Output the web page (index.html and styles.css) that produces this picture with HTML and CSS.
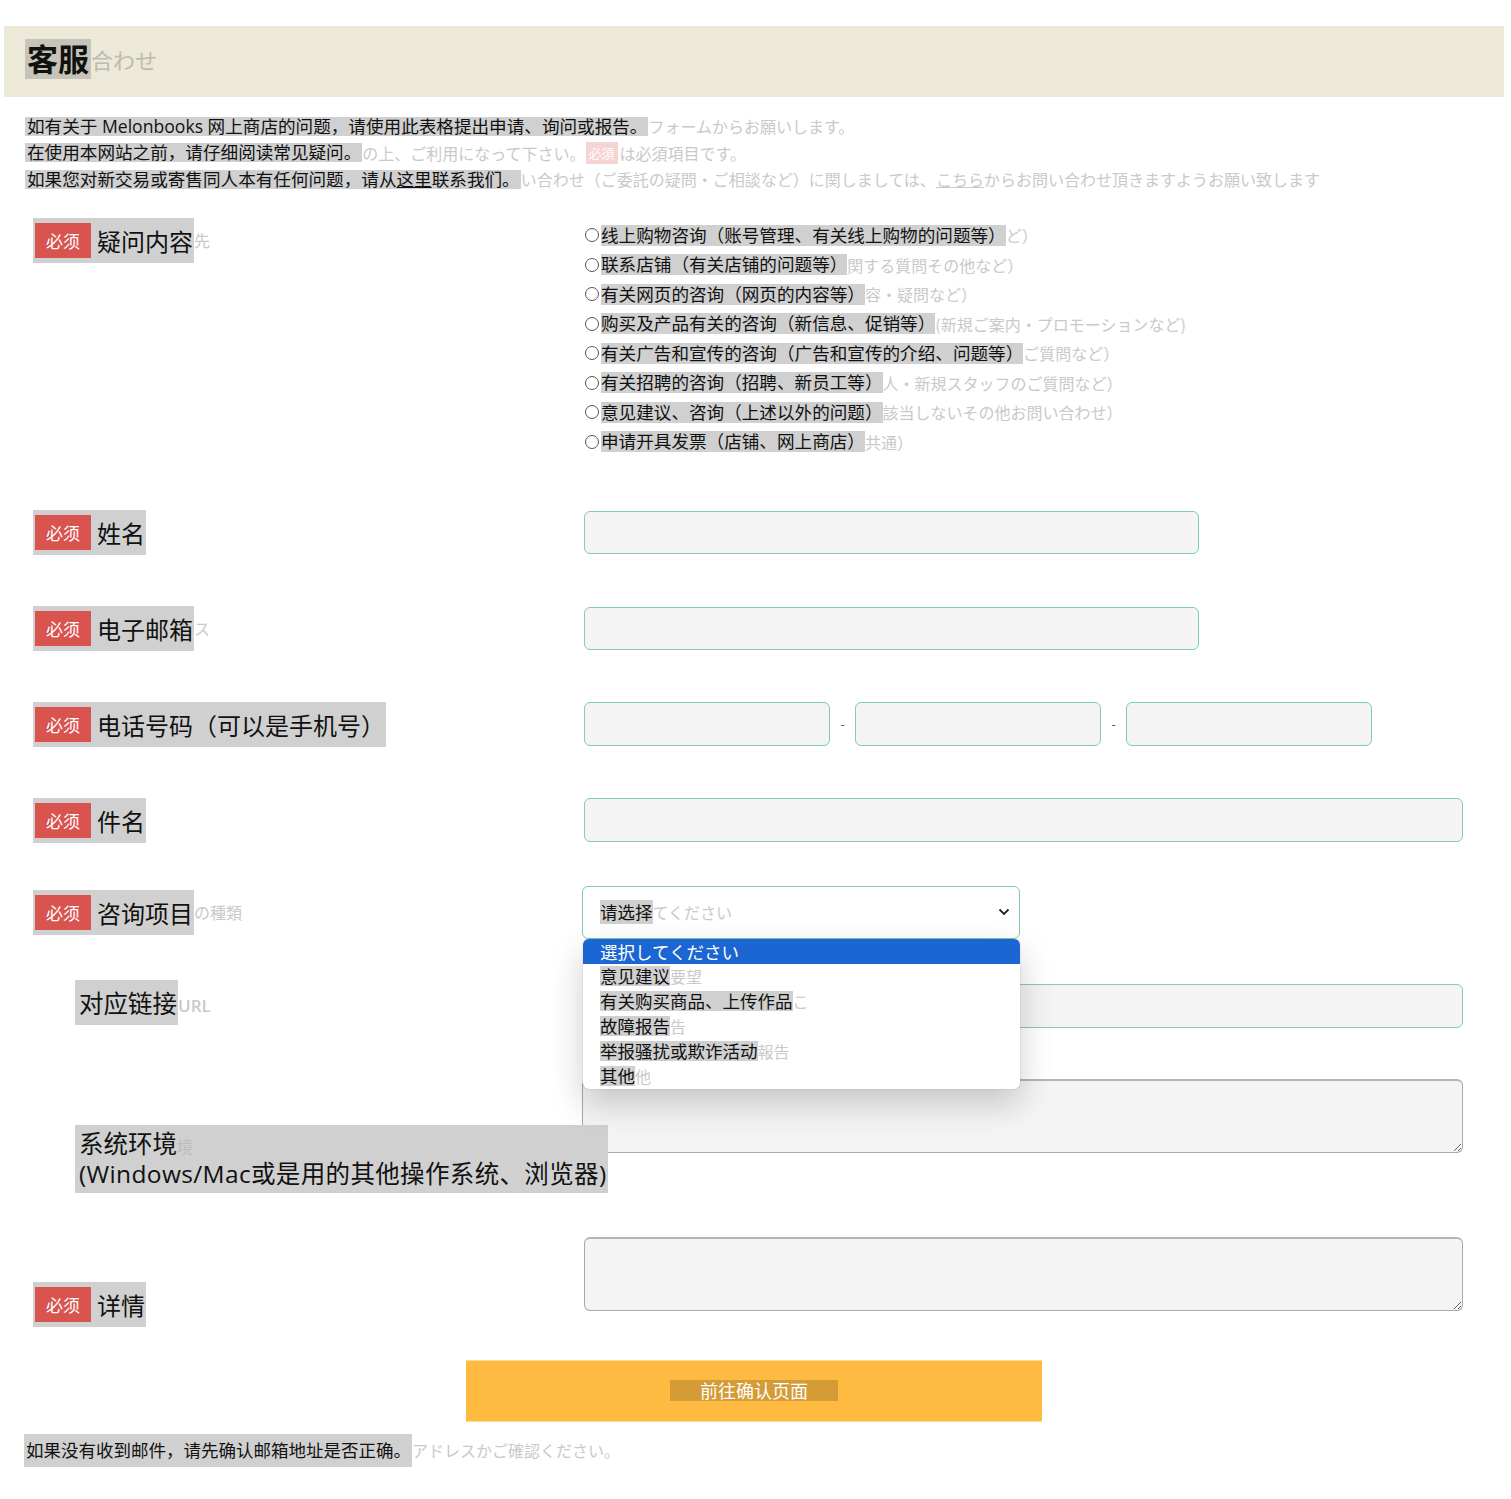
FILE: index.html
```html
<!DOCTYPE html>
<html lang="zh-CN">

<head>
    <meta charset="UTF-8">
    <meta name="viewport" content="width=device-width, initial-scale=1.0">
    <title>客服</title>
    <link rel="stylesheet" href="styles.css">
</head>

<body>
    <div class="page">
        <div class="header">
            <h1 class="title"><span class="hl">客服</span><span class="src">合わせ</span></h1>
        </div>

        <div class="intro">
            <div class="intro-line"><span class="hl">如有关于 Melonbooks 网上商店的问题，请使用此表格提出申请、询问或报告。</span><span class="src">フォームからお願いします。</span></div>
            <div class="intro-line"><span class="hl">在使用本网站之前，请仔细阅读常见疑问。</span><span class="src">の上、ご利用になって下さい。</span><span class="req-mini">必須</span><span class="src">は必須項目です。</span></div>
            <div class="intro-line"><span class="hl">如果您对新交易或寄售同人本有任何问题，请从<u>这里</u>联系我们。</span><span class="src">い合わせ（ご委託の疑問・ご相談など）に関しましては、<u>こちら</u>からお問い合わせ頂きますようお願い致します</span></div>
        </div>

        <form class="form" id="contactForm">
            <div class="form-row row-question">
                <div class="label-col"><span class="label-box"><span class="req">必须</span>疑问内容</span><span class="src">先</span></div>
                <div class="choices">
                    <div class="choice"><span class="circle"></span><span class="hl">线上购物咨询（账号管理、有关线上购物的问题等）</span><span class="src">ど）</span></div>
                    <div class="choice"><span class="circle"></span><span class="hl">联系店铺（有关店铺的问题等）</span><span class="src">関する質問その他など）</span></div>
                    <div class="choice"><span class="circle"></span><span class="hl">有关网页的咨询（网页的内容等）</span><span class="src">容・疑問など）</span></div>
                    <div class="choice"><span class="circle"></span><span class="hl">购买及产品有关的咨询（新信息、促销等）</span><span class="src">(新規ご案内・プロモーションなど)</span></div>
                    <div class="choice"><span class="circle"></span><span class="hl">有关广告和宣传的咨询（广告和宣传的介绍、问题等）</span><span class="src">ご質問など）</span></div>
                    <div class="choice"><span class="circle"></span><span class="hl">有关招聘的咨询（招聘、新员工等）</span><span class="src">人・新規スタッフのご質問など）</span></div>
                    <div class="choice"><span class="circle"></span><span class="hl">意见建议、咨询（上述以外的问题）</span><span class="src">該当しないその他お問い合わせ）</span></div>
                    <div class="choice"><span class="circle"></span><span class="hl">申请开具发票（店铺、网上商店）</span><span class="src">共通）</span></div>
                </div>
            </div>

            <div class="form-row row-name">
                <div class="label-col"><span class="label-box"><span class="req">必须</span>姓名</span></div>
                <input type="text" class="text-input w-mid">
            </div>

            <div class="form-row">
                <div class="label-col"><span class="label-box"><span class="req">必须</span>电子邮箱</span><span class="src">ス</span></div>
                <input type="email" class="text-input w-mid">
            </div>

            <div class="form-row">
                <div class="label-col"><span class="label-box"><span class="req">必须</span>电话号码（可以是手机号）</span></div>
                <div class="phone">
                    <input type="text" class="text-input w-phone">
                    <span class="dash">-</span>
                    <input type="text" class="text-input w-phone">
                    <span class="dash">-</span>
                    <input type="text" class="text-input w-phone">
                </div>
            </div>

            <div class="form-row">
                <div class="label-col"><span class="label-box"><span class="req">必须</span>件名</span></div>
                <input type="text" class="text-input w-full">
            </div>

            <div class="form-row row-select">
                <div class="label-col"><span class="label-box"><span class="req">必须</span>咨询项目</span><span class="src">の種類</span></div>
                <div class="select-wrap">
                    <div class="select">
                        <span><span class="hl">请选择</span><span class="src">てください</span></span>
                        <svg class="chevron" width="12" height="8" viewBox="0 0 12 8"><path d="M1.5 1.5 L6 6 L10.5 1.5" fill="none" stroke="#222" stroke-width="1.8"/></svg>
                    </div>
                    <div class="dropdown">
                        <div class="option active">選択してください</div>
                        <div class="option"><span class="hl">意见建议</span><span class="src">要望</span></div>
                        <div class="option"><span class="hl">有关购买商品、上传作品</span><span class="src">こ</span></div>
                        <div class="option"><span class="hl">故障报告</span><span class="src">告</span></div>
                        <div class="option"><span class="hl">举报骚扰或欺诈活动</span><span class="src">報告</span></div>
                        <div class="option"><span class="hl">其他</span><span class="src">他</span></div>
                    </div>
                </div>
            </div>

            <div class="form-row row-url">
                <div class="label-col"><span class="label-box plain">对应链接</span><span class="src src-url">URL</span></div>
                <input type="text" class="text-input w-full">
            </div>

            <div class="form-row row-area">
                <div class="label-col">
                    <span class="label-box plain multi">
                        <span class="line">系统环境<span class="src-in">境</span></span>
                        <span class="line line-wide">(Windows/Mac或是用的其他操作系统、浏览器)</span>
                    </span>
                </div>
                <textarea class="textarea wide"></textarea>
            </div>

            <div class="form-row row-area row-detail">
                <div class="label-col"><span class="label-box"><span class="req">必须</span>详情</span></div>
                <textarea class="textarea"></textarea>
            </div>

            <div class="actions">
                <button type="submit" class="btn-confirm"><span class="hl-btn">前往确认页面</span></button>
            </div>
        </form>

        <div class="note"><span class="hl">如果没有收到邮件，请先确认邮箱地址是否正确。</span><span class="src">アドレスかご確認ください。</span></div>
    </div>
</body>

</html>
```

FILE: styles.css
```css
* {
    box-sizing: border-box;
}

body {
    margin: 0;
    padding: 0;
    background: #fff;
    color: #111;
    font-family: "Open Sans", "Noto Sans CJK SC", sans-serif;
}

.page {
    padding: 26px 7px 0 4px;
}

/* translated text sits on a grey box, the original shows faded behind */
.hl {
    background: #d0d0d0;
    white-space: nowrap;
}

.src {
    color: #c9c9c9;
    font-family: "Noto Sans CJK JP", sans-serif;
    font-size: 16px;
    white-space: nowrap;
}

.header {
    height: 71px;
    background: #ece9d8;
    display: flex;
    align-items: center;
    padding: 0 0 5px 21px;
}

.title {
    margin: 0;
    display: flex;
    align-items: center;
    font-size: 31px;
    font-weight: bold;
}

.title .hl {
    background: #c6c4b8;
    line-height: 40px;
    padding: 0 2px;
}

.title .src {
    font-size: 22px;
    font-weight: normal;
    color: #bdbbaf;
}

.intro {
    margin-top: 16px;
    padding-left: 21px;
}

.intro-line {
    display: flex;
    align-items: center;
    height: 26.5px;
    font-size: 17.6px;
}

.intro-line .hl {
    line-height: 19px;
    padding: 0 1px 0 2px;
}

.req-mini {
    background: #f6d4d4;
    color: #fff;
    font-size: 13px;
    line-height: 22px;
    padding: 0 3px;
    margin: 0 2px 0 0;
}

.form {
    padding-left: 29px;
}

.form-row {
    display: flex;
    align-items: center;
    margin-top: 51px;
}

.label-col {
    width: 551px;
    flex-shrink: 0;
    display: flex;
    align-items: center;
    white-space: nowrap;
}

.label-box {
    display: inline-flex;
    align-items: center;
    height: 45px;
    padding: 0 1px 0 2px;
    background: #d0d0d0;
    font-size: 24px;
}

.req {
    width: 56px;
    height: 35px;
    background: #d9534f;
    color: #fff;
    font-size: 17px;
    display: flex;
    align-items: center;
    justify-content: center;
    margin-right: 6px;
}

.label-box.plain {
    margin-left: 42px;
    padding: 0 1px 0 4px;
    font-size: 24.5px;
}

.label-box.multi {
    display: block;
    height: 68px;
    padding: 4px 1px 4px 4px;
    line-height: 30px;
}

.label-box .line {
    display: block;
    height: 30px;
}

.label-box .line-wide {
    letter-spacing: 0.35px;
}

.src-in {
    color: #bcbcbc;
    font-size: 16px;
    line-height: 1;
}

.src-url {
    font-family: "Open Sans", sans-serif;
    font-size: 17px;
    font-weight: 600;
    margin-top: 6px;
}

.row-question {
    align-items: flex-start;
    margin-top: 25px;
}

.choices {
    padding-top: 3px;
}

.choice {
    display: flex;
    align-items: center;
    height: 29.5px;
    font-size: 17.6px;
}

.choice .hl {
    line-height: 21px;
}

.circle {
    width: 14px;
    height: 14px;
    border: 1px solid #555;
    border-radius: 50%;
    margin: 0 2px 0 1px;
}

.row-name {
    margin-top: 53px;
}

.text-input {
    height: 44px;
    border: 1px solid #7dcfae;
    border-radius: 6px;
    background: #f4f4f4;
    font-size: 16px;
    padding: 0 10px;
}

.w-mid {
    width: 615px;
    height: 43px;
}

.w-full {
    width: 879px;
}

.w-phone {
    width: 246px;
}

.phone {
    display: flex;
    align-items: center;
}

.dash {
    width: 25px;
    text-align: center;
    font-size: 13px;
    color: #555;
}

.row-select {
    margin-top: 43px;
}

.select-wrap {
    position: relative;
    z-index: 5;
    width: 438px;
    margin-left: -2px;
}

.select {
    height: 53px;
    border: 1px solid #7dcfae;
    border-radius: 6px;
    background: #fff;
    padding: 0 9px 0 17px;
    display: flex;
    align-items: center;
    justify-content: space-between;
    font-size: 17.5px;
}

.select .hl {
    line-height: 21px;
}

.dropdown {
    position: absolute;
    top: 53px;
    left: 1px;
    width: 437px;
    background: #fff;
    border-radius: 6px;
    overflow: hidden;
    box-shadow: 0 14px 34px rgba(0, 0, 0, 0.2), 0 0 1px rgba(0, 0, 0, 0.4);
}

.option {
    height: 25px;
    display: flex;
    align-items: center;
    padding-left: 17px;
    font-size: 17.5px;
    white-space: nowrap;
}

.option .hl {
    line-height: 20px;
}

.option.active {
    background: #1b66d2;
    color: #fff;
    font-family: "Noto Sans CJK JP", sans-serif;
}

.row-url {
    align-items: flex-start;
    margin-top: 41px;
}

.row-url .text-input {
    margin-top: 4px;
}

.row-area {
    align-items: flex-start;
}

.row-area .label-col {
    position: relative;
    z-index: 1;
    margin-top: 46px;
}

.row-detail {
    margin-top: 44px;
}

.row-detail .label-col {
    margin-top: 45px;
}

.textarea {
    width: 879px;
    height: 74px;
    border: 1px solid #a9a9a9;
    border-top: 2px solid #b5b5b5;
    border-radius: 6px;
    background: #f4f4f4;
}

.textarea.wide {
    width: 881px;
    margin-left: -2px;
}

.actions {
    display: flex;
    justify-content: center;
    margin-top: 33px;
    margin-left: -29px;
}

.btn-confirm {
    width: 576px;
    height: 62px;
    border: none;
    border-top: 1px solid #ffd98c;
    border-bottom: 1px solid #ffd98c;
    background: #ffba41;
    display: flex;
    align-items: center;
    justify-content: center;
    cursor: pointer;
    font-family: "Noto Sans CJK SC", sans-serif;
}

.hl-btn {
    background: #d49b36;
    color: #fff;
    font-size: 18px;
    line-height: 21px;
    padding: 0 30px;
}

.note {
    display: flex;
    align-items: center;
    margin-top: 12px;
    padding-left: 20px;
    font-size: 17.5px;
}

.note .hl {
    line-height: 33px;
    padding: 0 1px 0 2px;
}
```
